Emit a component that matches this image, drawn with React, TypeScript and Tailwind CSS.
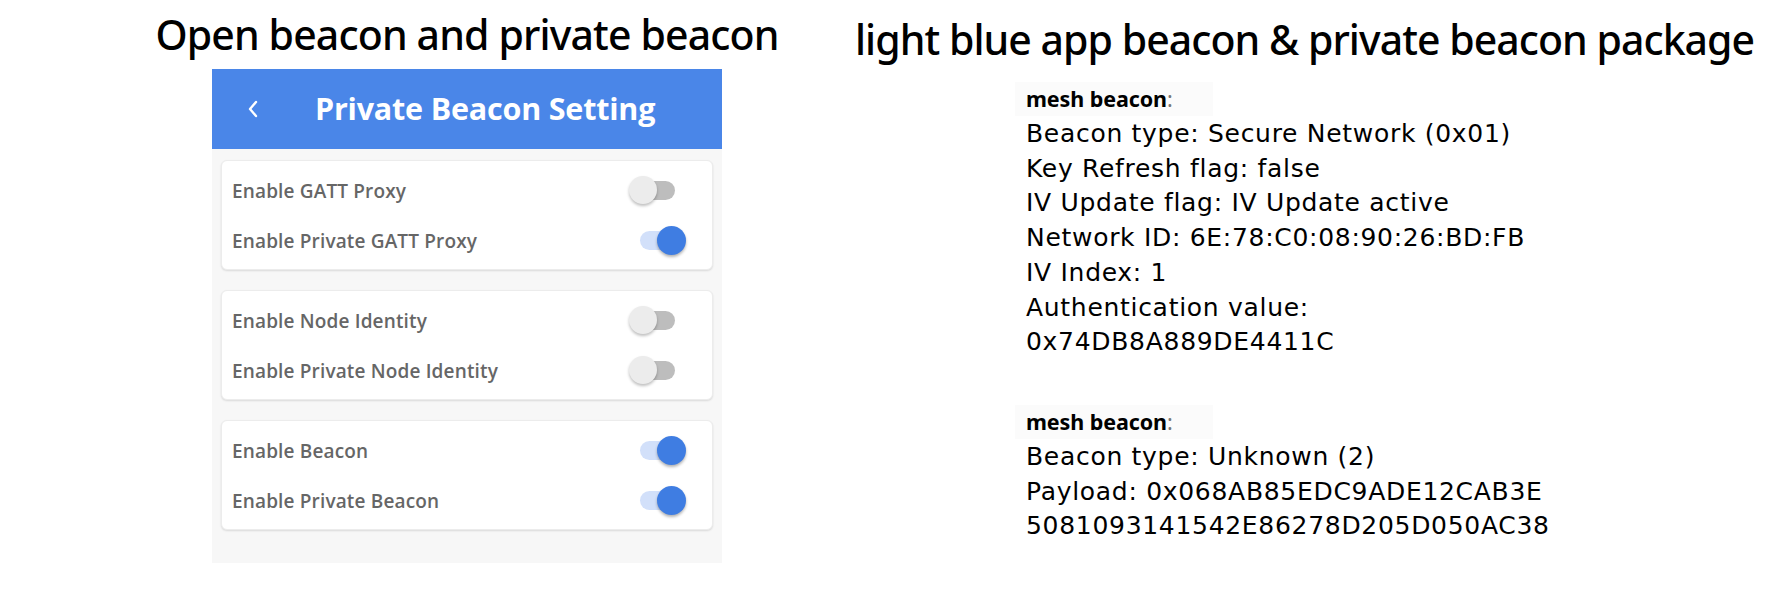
import React from "react"

type Row = { label: string; on: boolean }

const groups: Row[][] = [
  [
    { label: "Enable GATT Proxy", on: false },
    { label: "Enable Private GATT Proxy", on: true },
  ],
  [
    { label: "Enable Node Identity", on: false },
    { label: "Enable Private Node Identity", on: false },
  ],
  [
    { label: "Enable Beacon", on: true },
    { label: "Enable Private Beacon", on: true },
  ],
]

function Toggle({ on }: { on: boolean }) {
  return (
    <div className="relative w-[57px] h-[28px] flex items-center">
      <div
        className={
          on
            ? "absolute left-[11px] w-[36px] h-[19px] rounded-full bg-[#d2e0fa]"
            : "absolute left-[9px] w-[37px] h-[19px] rounded-full bg-[#bdbdbd]"
        }
      />
      <div
        className={
          on
            ? "absolute right-0 w-[29px] h-[29px] rounded-full bg-[#3f7de2] shadow-[0_2px_3px_rgba(0,0,0,0.3)]"
            : "absolute left-0 w-[28px] h-[28px] rounded-full bg-[#ececec] shadow-[0_2px_3px_rgba(0,0,0,0.25)]"
        }
      />
    </div>
  )
}

function PhonePanel() {
  return (
    <div className="w-[510px] h-[494px] bg-[#f7f7f7] flex flex-col">
      <div className="h-[80px] bg-[#4a86e8] flex items-center shrink-0">
        <svg className="ml-[35px]" width="12" height="18" viewBox="0 0 12 18" fill="none">
          <path d="M9 2 L3 9 L9 16" stroke="white" strokeWidth="2.4" strokeLinecap="round" strokeLinejoin="round" />
        </svg>
        <span className="ml-[56px] text-white text-[30.5px] font-bold tracking-[-0.2px] font-['Open_Sans',sans-serif]">
          Private Beacon Setting
        </span>
      </div>
      <div className="flex flex-col gap-[20px] px-[9px] pt-[11px]">
        {groups.map((g, i) => (
          <div
            key={i}
            className="bg-white rounded-[6px] border border-[#ececec] shadow-[0_1px_2px_rgba(0,0,0,0.12)] py-[4px]"
          >
            {g.map((r) => (
              <div key={r.label} className="h-[50px] flex items-center justify-between pl-[10px] pr-[26px]">
                <span className="pt-[3px] text-[19px] font-semibold tracking-[0.15px] text-[#666666] font-['Open_Sans',sans-serif]">
                  {r.label}
                </span>
                <Toggle on={r.on} />
              </div>
            ))}
          </div>
        ))}
      </div>
    </div>
  )
}

function BeaconBlock({ lines }: { lines: string[] }) {
  return (
    <div className="flex flex-col text-black">
      <div className="w-[198px] -ml-[11px] pl-[11px] h-[34px] flex items-center bg-[#fbfbfb] font-['Noto_Sans',sans-serif]">
        <span className="text-[21.5px] font-bold tracking-[-0.1px]">mesh beacon</span>
        <span className="text-[21.5px] text-[#777]">:</span>
      </div>
      <div className="mt-[1px] text-[25px] leading-[34.7px] tracking-[0.7px] font-['DejaVu_Sans',sans-serif]">
        {lines.map((l) => (
          <div key={l}>{l}</div>
        ))}
      </div>
    </div>
  )
}

export default function App() {
  return (
    <div className="w-[1791px] h-[596px] bg-white flex font-['Noto_Sans',sans-serif]">
      <div className="ml-[147px] w-[640px] flex flex-col items-center">
        <h1 className="mt-[8px] h-[61px] text-[41px] font-medium leading-[52px] text-black tracking-[-0.85px]">
          Open beacon and private beacon
        </h1>
        <PhonePanel />
      </div>
      <div className="ml-[68px] flex flex-col">
        <h1 className="mt-[11px] h-[71px] text-[41px] font-medium leading-[56px] text-black tracking-[-0.95px]">
          light blue app beacon &amp; private beacon package
        </h1>
        <div className="ml-[171px] flex flex-col gap-[45px]">
          <BeaconBlock
            lines={[
              "Beacon type: Secure Network (0x01)",
              "Key Refresh flag: false",
              "IV Update flag: IV Update active",
              "Network ID: 6E:78:C0:08:90:26:BD:FB",
              "IV Index: 1",
              "Authentication value:",
              "0x74DB8A889DE4411C",
            ]}
          />
          <BeaconBlock
            lines={[
              "Beacon type: Unknown (2)",
              "Payload: 0x068AB85EDC9ADE12CAB3E",
              "5081093141542E86278D205D050AC38",
            ]}
          />
        </div>
      </div>
    </div>
  )
}
